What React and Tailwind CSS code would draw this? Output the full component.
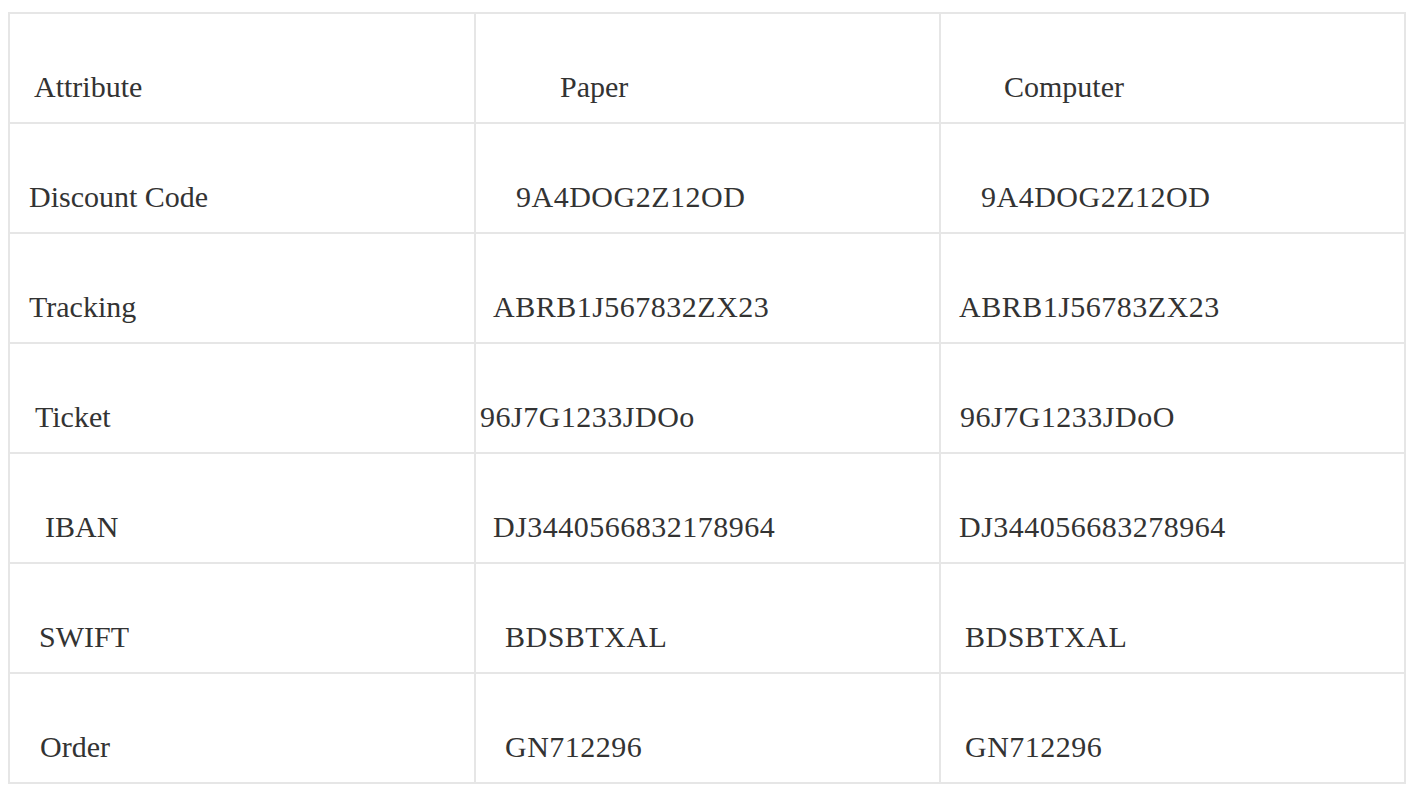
import React from "react";

// each cell: [text, left padding in px class]
const rows = [
  [
    ["Attribute", "pl-[24px]"],
    ["Paper", "pl-[84px]"],
    ["Computer", "pl-[63px]"],
  ],
  [
    ["Discount Code", "pl-[19px]"],
    ["9A4DOG2Z12OD", "pl-[40px]"],
    ["9A4DOG2Z12OD", "pl-[40px]"],
  ],
  [
    ["Tracking", "pl-[19px]"],
    ["ABRB1J567832ZX23", "pl-[17px]"],
    ["ABRB1J56783ZX23", "pl-[18px]"],
  ],
  [
    ["Ticket", "pl-[25px]"],
    ["96J7G1233JDOo", "pl-[4px]"],
    ["96J7G1233JDoO", "pl-[19px]"],
  ],
  [
    ["IBAN", "pl-[35px]"],
    ["DJ3440566832178964", "pl-[17px]"],
    ["DJ344056683278964", "pl-[18px]"],
  ],
  [
    ["SWIFT", "pl-[29px]"],
    ["BDSBTXAL", "pl-[29px]"],
    ["BDSBTXAL", "pl-[24px]"],
  ],
  [
    ["Order", "pl-[30px]"],
    ["GN712296", "pl-[29px]"],
    ["GN712296", "pl-[24px]"],
  ],
];

const Cell = ({ text, pad, value }) => {
  return (
    <div
      className={`h-[110px] border-r-2 border-b-2 border-[#e6e6e6] pt-[55px] text-[30px] leading-[36px] text-[#333] whitespace-nowrap ${pad} ${
        value ? "tracking-[0.5px]" : ""
      }`}
    >
      {text}
    </div>
  );
};

const App = () => {
  return (
    <div
      className="min-h-screen bg-white pl-[8px] pt-[12px]"
      style={{ fontFamily: '"Liberation Serif", "Times New Roman", serif' }}
    >
      <div className="w-[1398px] border-l-2 border-t-2 border-[#e6e6e6] grid grid-cols-[466px_465px_465px]">
        {rows.map((r, ri) =>
          r.map(([text, pad], ci) => (
            <Cell key={ri + "-" + ci} text={text} pad={pad} value={ri > 0 && ci > 0} />
          ))
        )}
      </div>
    </div>
  );
};

export default App;
